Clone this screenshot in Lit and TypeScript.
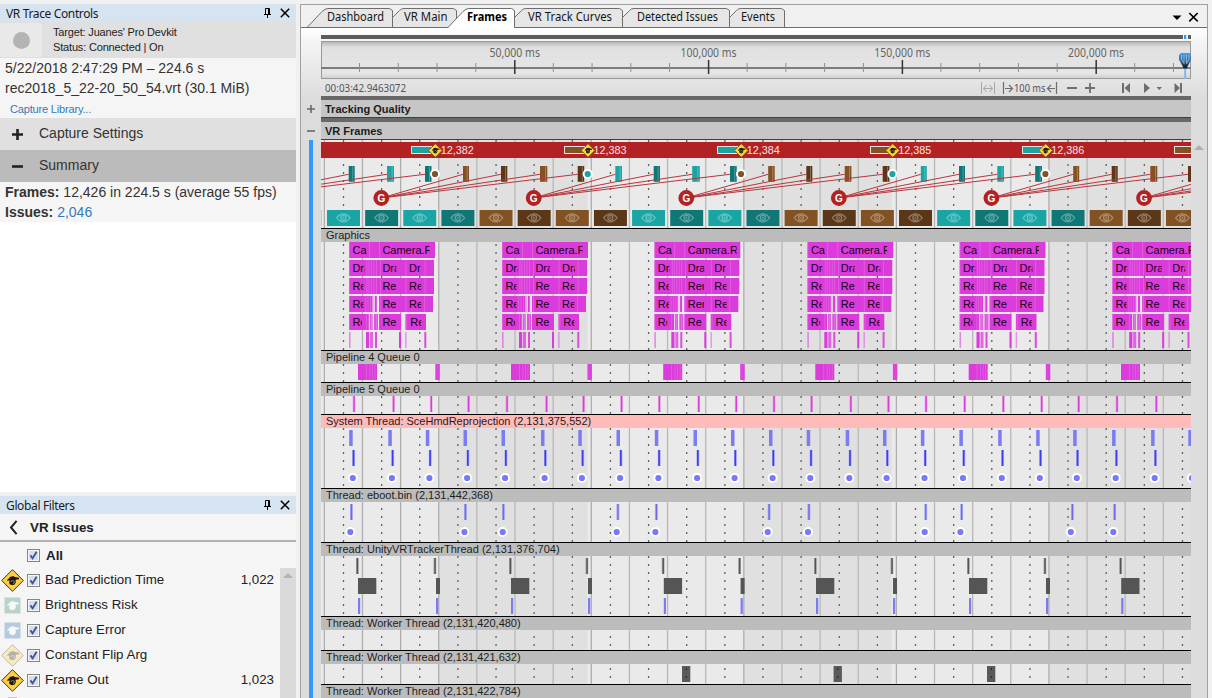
import { LitElement, html, svg, css } from "lit";
import { customElement } from "lit/decorators.js";

const X0 = 321;
const WIDTH = 870;
const STEP = 38.135;
const TEAL = "#1aa5a5";
const DTEAL = "#107777";
const BROWN = "#825223";
const DBROWN = "#5b3717";
const MAGENTA = "#db3bdb";
const CYCLE = [TEAL, DTEAL, TEAL, DTEAL, BROWN, DBROWN, BROWN, DBROWN];
const FRAME_STARTS = [435.3, 588, 741.3, 892.7, 1045.7];

const bar = (x: number, y: number, w: number, h: number, fill: string, o = 1) =>
  svg`<rect x=${x} y=${y} width=${w} height=${h} fill=${fill} fill-opacity=${o}></rect>`;

/* The bent-arrow symbol shown on every issue badge, drawn around 0,0 */
const issueGlyph = (color: string) => svg`
  <g fill=${color}>
    <path d="M-5.4 .6L-4.6-1.2L-2.6-2.2L-3.4-3.2L-1.4-3.6L.6-4.2L2.4-3.2L6.4-2.6L6.6-1L3-.6L3.4 2L2.2 4.2L-.4 5L-2.8 4L-3.4 2L-2.6 .4L-3.8 .2Z"></path>
    <path d="M-1.6 1.8A1.8 1.5 0 1 1 .4 3.3" fill="none" stroke="#fff" stroke-opacity=".5" stroke-width=".9"></path>
  </g>`;

const eye = (cx: number) => svg`
  <g transform="translate(${cx} 217.8)" fill="none" stroke="#fff" stroke-opacity=".34">
    <path d="M-6.8 0Q0-8 6.8 0Q0 8-6.8 0Z" stroke-width="1.2"></path>
    <circle r="2.5" stroke-width="1.3"></circle><circle r="1" fill="#fff" fill-opacity=".3" stroke="none"></circle>
  </g>`;

const grid = (y: number, h: number) => {
  const start = Math.floor((y - 4) / 8) * 8 + 4;
  const cols = [...Array(24).keys()];
  return svg`
    ${bar(X0, y, WIDTH, h, "#eaeaea")}
    ${bar(438.5, y, 149, h, "#e0e0e0")}${bar(743.7, y, 148, h, "#e0e0e0")}${bar(1048.7, y, 143, h, "#e0e0e0")}
    ${cols.map((k) => svg`
      ${bar(323.7 + STEP * k, y, 1.3, h, k > 2 && k % 4 !== 3 ? "#b8b8b8" : "#aeaeae")}
      <line x1=${343.5 + STEP * k} x2=${343.5 + STEP * k} y1=${start} y2=${y + h} class="dots"></line>`)}`;
};

const dot = (x: number, y: number, r: number, fill: string) => svg`
  <circle cx=${x} cy=${y} r=${r + 1.9} fill="#fff"></circle><circle cx=${x} cy=${y} r=${r} fill=${fill}></circle>`;

/* ---- VR frame overview ---- */
const MARKERS: [number, number][] = [
  [348.7, 6], [387, 7], [425, 6.5], [463, 6], [501, 6.3], [540, 7.3], [577.7, 6.5], [615.3, 6.7], [653.7, 6.3], [692.2, 7.6],
  [730, 6.7], [768.2, 6.5], [806.3, 6], [844.7, 6.7], [882.7, 6.7], [920.8, 6], [959, 6], [997.3, 6.7], [1035.2, 6.8],
  [1073.2, 6], [1111.7, 6], [1150.3, 7], [1188, 6],
];
const G_POINTS = [228.8, 381.3, 533.7, 686.3, 838.8, 991.4, 1144];

const framesLane = () => svg`
  ${bar(X0, 142, WIDTH, 16, "#b22222")}
  ${[411, 564, 717, 870, 1022, 1174].map((x, i) => svg`
    <rect x=${x + 0.5} y="146.5" width="20" height="7" fill=${i % 2 ? BROWN : TEAL} stroke="#f3e3e3"></rect>`)}
  ${FRAME_STARTS.map((x, i) => svg`
    <path transform="translate(${x} 150.5)" d="M0-6.8L6.8 0L0 6.8L-6.8 0Z" fill="#ffd23c" stroke="#6f5308" stroke-width=".8"></path>
    <g transform="translate(${x} 150.3) scale(.62)">${issueGlyph("#241c02")}</g>
    <text x=${x + 5.5} y="154" class="num" textLength="33" lengthAdjust="spacingAndGlyphs">12,38${i + 2}</text>`)}
  ${MARKERS.map(([x, w], k) => svg`
    ${bar(x, 166, w, 15.8, CYCLE[(k + 1) % 8])}${bar(x + w - 2.3, 166.5, 0.8, 15, "#fff", 0.35)}`)}
  ${G_POINTS.flatMap((g, i) => [0, 1, 2, 3].map((j) => {
    const m = MARKERS[(i - 1) * 4 + 3 + j];
    const tx = m ? m[0] : g + 81.7 + STEP * j;
    return svg`<line x1=${g} y1="198" x2=${tx} y2="174.3" stroke="#b8363c" stroke-width="1"></line>`;
  }))}
  ${G_POINTS.slice(1).map((g) => svg`<circle cx=${g} cy="198" r="7.9" fill="#b22222"></circle>
    <text x=${g} y="201.6" class="g">G</text>`)}
  ${FRAME_STARTS.map((x, i) => dot(x - 0.3, 174, 3.1, i % 2 ? TEAL : BROWN))}
  ${bar(321, 210, 1, 16, "#d6c8b6")}
  ${[...Array(23).keys()].map((k) => svg`${bar(327 + STEP * k, 210, 33, 16, CYCLE[k % 8])}${eye(343.4 + STEP * k)}`)}`;

/* ---- Graphics call stacks ---- */
const STACKS: [number, number, number][] = [[349, 47, 14], [502, 47, 14.5], [654.3, 49, 16.5], [807.3, 46.5, 14], [959.5, 46, 14], [1112.2, 48, 16]];
const seam = (xs: number[], y: number) => xs.map((x) => bar(x, y, 0.9, 16, "#fff", 0.18));
const label = (x: number, y: number, w: number, s: string) => svg`
  <svg x=${x} y=${y} width=${w} height="16" overflow="hidden"><text x="0" y="12" class="call">${s}</text></svg>`;

const stack = ([s, cam, w]: [number, number, number], i: number) => svg`
  ${bar(s, 242, 86, 16, MAGENTA)}${seam([s, s + 20, s + 30], 242)}
  ${label(s + 3.6, 242, 14.5, "Ca")}${label(s + 33.4, 242, cam, "Camera.R")}
  ${[260, 278].map((y) => svg`${bar(s, y, 85, 16, MAGENTA)}
    ${seam([s, s + 17.5, s + 19.5, s + 22, s + 24.5, s + 27, s + 31, s + 56.5, s + 75.7], y)}`)}
  ${label(s + 3.4, 260, 12.3, "Dra")}${label(s + 33.4, 260, w, "Dra")}${label(s + 60, 260, i === 1 || i > 2 ? 13 : 11.5, "Dra")}
  ${label(s + 3.4, 278, 11, "Re")}${label(s + 33.4, 278, w, i === 2 ? "Rer" : "Re")}${label(s + 60, 278, 12.3, "Re")}
  ${bar(s, 296, 23.5, 16, MAGENTA)}${bar(s + 25.8, 296, 2, 16, MAGENTA)}${bar(s + 24.2, 296, 0.8, 16, MAGENTA, 0.4)}${bar(s + 30, 296, 54, 16, MAGENTA)}
  ${seam([s, s + 16.3, s + 18.6, s + 21, s + 31, s + 56.5, s + 75], 296)}
  ${label(s + 3.4, 296, 11, "Re")}${label(s + 33.4, 296, w, i === 2 ? "Rer" : "Re")}${label(s + 60, 296, 12.3, "Re")}
  ${bar(s, 314, 19.8, 16, MAGENTA)}${bar(s + 20.7, 314, 3, 16, MAGENTA, 0.8)}${bar(s + 25, 314, 4, 16, MAGENTA, 0.85)}
  ${bar(s + 30, 314, 22, 16, MAGENTA)}${bar(s + 56.4, 314, 20.6, 16, MAGENTA)}${seam([s, s + 17, s + 22, s + 27, s + 57.3], 314)}
  ${label(s + 3.4, 314, 9.5, "Re")}${label(s + 33.4, 314, 14, "Re")}${label(s + 61.3, 314, 11, "Re")}
  ${bar(s, 332, 1.6, 16, MAGENTA, 0.55)}${bar(s + 17, 332, 3.2, 16, MAGENTA)}${bar(s + 21, 332, 3, 16, MAGENTA, 0.75)}${bar(s + 26, 332, 2, 16, MAGENTA, 0.9)}
  ${bar(s + 50, 332, 2, 16, MAGENTA)}${bar(s + 56.2, 332, 1.4, 16, MAGENTA, 0.5)}${bar(s + 75.3, 332, 2, 16, MAGENTA, 0.9)}`;

const graphicsLane = () => svg`${STACKS.map(stack)}`;

const pipe4Lane = () => svg`
  ${[358, 511, 663.2, 815.3, 968.7, 1121].map((x) => svg`${bar(x, 364, 19, 16, MAGENTA)}${seam([x + 8, x + 11.4, x + 14, x + 16.5], 364)}`)}
  ${[435.3, 587.4, 740.2, 892.8, 1045.8].map((x) => bar(x, 364, 4.5, 16, MAGENTA, 0.95))}`;

const TICKS5 = [353, 392.5, 430.2, 467.5, 506, 545.5, 582.5, 620.5, 658.3, 697.7, 735.2, 773, 810.5, 849.8, 887.4, 925, 963.6, 1002.3, 1040.6, 1077.6, 1116, 1155.3];
const pipe5Lane = () => svg`${TICKS5.map((x) => svg`${bar(x - 0.3, 396, 2.6, 16, MAGENTA, 0.4)}${bar(x + 0.4, 396, 1.4, 16, MAGENTA)}`)}`;

const SYS = [349.2, 388.3, 425.8, 463.5, 501.5, 541, 578.3, 616.5, 654.8, 693.5, 731, 769, 806.7, 845.7, 883, 920.9, 959.4, 998.2, 1036.2, 1073.2, 1112.1, 1151.1, 1188.3];
const systemLane = () => svg`${SYS.map((x) => svg`
  ${bar(x, 430, 3.5, 16, "#7b7bf5")}${bar(x + 3, 450, 2.8, 16, "#9999f5", 0.8)}${bar(x + 3.5, 450, 1.6, 16, "#3c3cf8")}${dot(x + 3.6, 478, 3.1, "#7878fc")}`)}`;

const EBOOT: [number, number][] = [[350, 350.3], [464, 464.4], [502, 502.7], [616.5, 616.7], [655, 655.4], [767.7, 767.7], [807.5, 808], [924.3, 924.7], [960.2, 960.4], [1071, 1070.8], [1113.2, 1113.3]];
const ebootLane = () => svg`${EBOOT.map(([a, b]) => svg`
  ${bar(a, 504, 2.8, 16, "#9292f3", 0.75)}${bar(a + 0.8, 504, 1.3, 16, "#6c6cec")}${dot(b, 532, 3.1, "#7878fc")}`)}`;

const UNITY = [358, 436, 511, 588, 663.8, 740.6, 816, 893, 969, 1046, 1121.2];
const unityLane = () => svg`${UNITY.map((x, i) => svg`
  ${bar(x - 2 - (i % 2 ? 0.4 : 0), 558, 2.6, 16, "#999")}${bar(x - 1.2 - (i % 2 ? 0.4 : 0), 558, 1.3, 16, "#555")}
  ${bar(x, 578, i % 2 ? 4 : 18.3, 16, "#555")}${bar(x, 598, 2.2, 16, "#7b7bf3")}`)}`;

const emptyLane = () => svg``;
const worker2Lane = () => svg`${[682, 833.6, 987].map((x) => svg`${bar(x, 666, 8.3, 16, "#5a5a5a")}
  <path d="M${x + 4.3} 668v2M${x + 4.3} 676v2" stroke="#222"></path>`)}`;

const LANES = [
  { title: "Graphics", y: 242, h: 108, draw: graphicsLane },
  { title: "Pipeline 4 Queue 0", y: 364, h: 18, draw: pipe4Lane },
  { title: "Pipeline 5 Queue 0", y: 396, h: 18, draw: pipe5Lane },
  { title: "System Thread: SceHmdReprojection (2,131,375,552)", y: 428, h: 60, draw: systemLane, hot: true },
  { title: "Thread: eboot.bin (2,131,442,368)", y: 502, h: 40, draw: ebootLane },
  { title: "Thread: UnityVRTrackerThread (2,131,376,704)", y: 556, h: 60, draw: unityLane },
  { title: "Thread: Worker Thread (2,131,420,480)", y: 630, h: 20, draw: emptyLane },
  { title: "Thread: Worker Thread (2,131,421,632)", y: 664, h: 20, draw: worker2Lane },
];

@customElement("trace-tracks")
class TraceTracks extends LitElement {
  static styles = css`
    :host { display: block; width: 870px; font: 11px "Liberation Sans", Arial, sans-serif; }
    svg { display: block; }
    .dots { stroke: #606060; stroke-width: 1.3; stroke-dasharray: 2 6; }
    .head { box-sizing: border-box; height: 14px; line-height: 13px; border-top: 1px solid #000; background: #bcbcbc; color: #1c1c1c; padding-left: 5px; white-space: nowrap; }
    .hot { background: #ffbaba; }
    .num { font-size: 11px; fill: #fbe4e4; }
    .g { font-size: 10px; font-weight: bold; fill: #fff; text-anchor: middle; }
    .call { font-size: 11px; fill: #180018; }
  `;
  render() {
    return html`
      <svg width="870" height="88" viewBox="321 140 870 88">${grid(140, 88)}${framesLane()}</svg>
      ${LANES.map((l) => html`
        <div class="head ${l.hot ? "hot" : ""}">${l.title}</div>
        <svg width="870" height=${l.h} viewBox="321 ${l.y} 870 ${l.h}">${grid(l.y, l.h)}${l.draw()}</svg>`)}
      <div class="head">Thread: Worker Thread (2,131,422,784)</div>`;
  }
}

const pinIcon = html`<svg width="9" height="12" viewBox="0 0 9 12" fill="none" stroke="#000"><path d="M2.5 7V1.5h4V7M5.5 1.5V7M1 7.5h7M4.5 8v3"></path></svg>`;
const closeIcon = html`<svg width="10" height="10" viewBox="0 0 10 10" stroke="#000" stroke-width="1.5"><path d="M.8.8l8.4 8.4M9.2.8L.8 9.2"></path></svg>`;

@customElement("side-panels")
class SidePanels extends LitElement {
  static styles = css`
    :host { display: flex; flex-direction: column; width: 296px; height: 698px; overflow: hidden; box-sizing: border-box; padding-top: 4px; font: 14px/20px "Liberation Sans", Arial, sans-serif; color: #333; }
    svg { display: block; flex: none; }
    .title { height: 18px; flex: none; display: flex; align-items: center; background: #d6e4f2; padding: 0 6px; color: #1b1b1b; font: 12px/18px "Noto Sans", sans-serif; letter-spacing: -.36px; }
    .title span { flex: 1; padding-top: 1px; }
    .title svg + svg { margin-left: 8px; }
    .target { height: 36px; flex: none; display: flex; align-items: center; gap: 11px; background: #e0e0e0; font-size: 11px; line-height: 15px; color: #222; letter-spacing: -.17px; }
    .rec { width: 42px; height: 34px; border-radius: 3px; background: #e9e9e9; display: grid; place-items: center; }
    .rec i { width: 17px; height: 17px; border-radius: 50%; background: #b4b4b4; }
    .body { background: #f5f5f5; padding: 0 5px; white-space: nowrap; flex: none; }
    .info { height: 60px; }
    .link { color: #337ab7; }
    .lib { font-size: 11px; padding-left: 5px; line-height: 22px; letter-spacing: -.17px; }
    .acc { height: 32px; flex: none; display: flex; align-items: center; gap: 16px; padding-left: 12px; background: #e0e0e0; }
    .acc.open { background: #bbb; }
    .acc span { margin-top: -2px; }
    .blank { background: #fff; height: 270px; flex: none; margin-bottom: 4px; }
    .back { height: 25px; flex: none; display: flex; align-items: center; gap: 12px; padding: 1px 0 0 9px; background: #f5f5f5; border-bottom: 2px solid #b3b3b3; font-weight: bold; }
    .all, .row { display: flex; align-items: center; height: 25px; }
    .filters { flex: 1; background: #f5f5f5; display: flex; flex-direction: column; min-height: 0; color: #222; font-size: 13.33px; }
    .all { padding: 1px 0 0 27px; font-weight: bold; gap: 6px; flex: none; }
    .split { display: flex; flex: 1; min-height: 0; }
    .list { flex: 1; overflow: hidden; }
    .row { padding-right: 6px; }
    .row svg + svg { margin: 0 5px 0 2px; }
    .row span { flex: 1; white-space: nowrap; }
    .row span, .row em { margin-top: -1px; font-style: normal; }
    .bar { width: 16px; background: #dadada; display: flex; justify-content: center; padding-top: 5px; }
  `;
  check() {
    return html`<svg width="13" height="13" viewBox="0 0 13 13"><rect x=".5" y=".5" width="12" height="12" fill="#f7f7f7" stroke="#858585"></rect><rect x="2" y="2" width="9" height="9" fill="#d9dee6"></rect><path d="M3.4 6.4L5.6 9.4L9.6 2.8" fill="none" stroke="#3c57a0" stroke-width="1.9"></path></svg>`;
  }
  badge(kind: string) {
    const body = kind === "warn" || kind === "dim"
      ? svg`<path d="M12.5 1.7L23.3 12.5L12.5 23.3L1.7 12.5Z" fill="#ffce42" stroke="#3c3418" stroke-width="1"></path>`
      : svg`<rect x="4.5" y="4.5" width="16" height="16" fill=${kind}></rect>`;
    const color = kind === "warn" || kind === "dim" ? "#1c1602" : "#f3f8f8";
    return html`<svg width="25" height="25" viewBox="0 0 25 25" opacity=${kind === "dim" ? 0.3 : 1}>${body}<g transform="translate(12.5 12.3)">${issueGlyph(color)}</g></svg>`;
  }
  render() {
    const rows = [
      ["Bad Prediction Time", "1,022", "warn"], ["Brightness Risk", "", "#b9d3cb"], ["Capture Error", "", "#b5cade"],
      ["Constant Flip Arg", "", "dim"], ["Frame Out", "1,023", "warn"],
    ];
    return html`
      <div class="title"><span>VR Trace Controls</span>${pinIcon}${closeIcon}</div>
      <div class="target"><div class="rec"><i></i></div><div>Target: Juanes' Pro Devkit<br>Status: Connected | On</div></div>
      <div class="body info"><div>5/22/2018 2:47:29 PM – 224.6 s</div><div>rec2018_5_22-20_50_54.vrt (30.1 MiB)</div><div class="link lib">Capture Library...</div></div>
      <div class="acc"><svg width="11" height="11"><path d="M0 5.5h11M5.5 0v11" stroke="#222" stroke-width="2.6"></path></svg><span>Capture Settings</span></div>
      <div class="acc open"><svg width="11" height="11"><path d="M0 5.5h11" stroke="#222" stroke-width="2.6"></path></svg><span>Summary</span></div>
      <div class="body"><div><b>Frames:</b> 12,426 in 224.5 s (average 55 fps)</div><div><b>Issues:</b> <span class="link">2,046</span></div></div>
      <div class="blank"></div>
      <div class="title"><span>Global Filters</span>${pinIcon}${closeIcon}</div>
      <div class="filters">
        <div class="back"><svg width="9" height="15" viewBox="0 0 9 15"><path d="M7.6.8L2 7.5L7.6 14.2" fill="none" stroke="#222" stroke-width="2"></path></svg>VR Issues</div>
        <div class="all">${this.check()}All</div>
        <div class="split">
          <div class="list">
            ${rows.map((r) => html`<div class="row">${this.badge(r[2])}${this.check()}<span>${r[0]}</span><em>${r[1]}</em></div>`)}
            <svg width="25" height="6"><rect x="8" y="4" width="9" height="2" fill="#e8bdb8"></rect></svg>
          </div>
          <div class="bar"><svg width="10" height="5"><path d="M0 5L5 0L10 5Z" fill="#b3b3b3"></path></svg></div>
        </div>
      </div>`;
  }
}

interface Tab { text: string; x: number; end: number; tx: number; len: number; active?: boolean; long?: boolean }
const TABS: Tab[] = [
  { text: "Dashboard", x: 307, end: 393, tx: 327, len: 57, long: true },
  { text: "VR Main", x: 393, end: 457, tx: 404, len: 43.5 },
  { text: "VR Track Curves", x: 515, end: 623, tx: 528, len: 84 },
  { text: "Detected Issues", x: 623, end: 730, tx: 637, len: 81 },
  { text: "Events", x: 730, end: 785, tx: 741, len: 34 },
  { text: "Frames", x: 448, end: 515, tx: 467, len: 40, long: true, active: true },
];

@customElement("app-root")
class AppRoot extends LitElement {
  static styles = css`
    :host { display: flex; width: 1212px; height: 698px; overflow: hidden; background: #f0f0f0; font-family: "Noto Sans", sans-serif; }
    svg { display: block; }
    .doc { margin: 4px 0 0 4px; width: 908px; box-sizing: border-box; height: 694px; border: 1px solid #a0a0a0; border-bottom: 0; display: flex; flex-direction: column; background: #f0f0f0; }
    .tab { font-size: 12px; fill: #161616; }
    .sel { font-weight: bold; fill: #000; }
    .view { flex: 1; min-height: 0; padding: 7px 0 0; background: linear-gradient(#fff, #f4f4f4 14px, #dcdcdc 72px); }
    .time { margin-left: 20px; }
    .rul { font-size: 12px; fill: #666; text-anchor: middle; }
    .stamp { font-size: 11px; fill: #555; }
    .group { display: flex; align-items: stretch; height: 22px; }
    .sign { width: 20px; display: grid; place-items: center; padding-top: 4px; box-sizing: border-box; }
    .name { width: 870px; box-sizing: border-box; border-top: 4px solid #686868; border-bottom: 1px solid #404040; background: #c6c6c6; font: bold 11px/18px "Liberation Sans", Arial, sans-serif; color: #1c1c1c; padding-left: 4px; }
    .tracks { display: flex; }
    .rail { width: 4px; margin: 0 8px; background: #3399ff; height: 558px; }
    .scroll { flex: 1; padding: 5px 0 0 3px; }
  `;
  tabShape(t: Tab) {
    const d = t.long
      ? `M${t.x} 27.5L${t.x + 15} 11.5Q${t.x + 18} 8.5 ${t.x + 21} 8.5H${t.end - 3.5}L${t.end - 0.5} 10.5V27.5`
      : `M${t.x - 0.5} 27.5V17.5L${t.x + 6.5} 10.5Q${t.x + 8} 8.5 ${t.x + 11} 8.5H${t.end - 3.5}L${t.end - 0.5} 10.5V27.5`;
    return svg`<path d=${d} fill=${t.active ? "#fff" : "#e6e6e6"} stroke="#6e6e6e"></path>
      ${t.active ? svg`<path d="M${t.x + 0.8} 27.5H${t.end - 1}" stroke="#fff"></path>` : svg`<path d="M${t.x} 27.5H${t.end}" stroke="#6e6e6e"></path>`}
      <text class="tab ${t.active ? "sel" : ""}" x=${t.tx} y="21" textLength=${t.len} lengthAdjust="spacingAndGlyphs">${t.text}</text>`;
  }
  render() {
    return html`
      <side-panels></side-panels>
      <div class="doc">
        <svg width="906" height="23" viewBox="301 5 906 23">
          <path d="M301 27.5H1207" stroke="#6e6e6e"></path>
          ${TABS.map((t) => this.tabShape(t))}
          <path d="M1172.5 15.5h9l-4.5 4.5z"></path>
          <path d="M1189.3 13l8.4 8.4M1197.7 13l-8.4 8.4" stroke="#000" stroke-width="1.6"></path>
        </svg>
        <div class="view">
          <svg class="time" width="882" height="61" viewBox="321 35 882 61">
            <defs><linearGradient id="r" x2="0" y2="1"><stop offset="0" stop-color="#b4b4b4"></stop><stop offset=".16" stop-color="#e0e0e0"></stop><stop offset=".85" stop-color="#e6e6e6"></stop><stop offset="1" stop-color="#cfcfcf"></stop></linearGradient>
              <linearGradient id="p" x2="0" y2="1"><stop offset="0" stop-color="#3f9cf0"></stop><stop offset=".45" stop-color="#3a6d9c"></stop><stop offset="1" stop-color="#101418"></stop></linearGradient></defs>
            ${bar(321, 35, 870, 4, "#5c5c5c")}${bar(1183, 35, 5, 4, "#f8f8f8")}${bar(1184, 35, 2.3, 4, "#3399ff")}
            <rect x="321.5" y="41.5" width="869" height="37" fill="url(#r)" stroke="#999"></rect>
            ${bar(321, 67, 870, 2, "#7c7c7c")}
            ${[...Array(22).keys()].map((i) => (i + 1) % 5 ? bar(359 + 38.76 * i, 63, 1, 9, "#8f8f8f") : bar(359 + 38.76 * i, 60, 1.5, 14, "#333"))}
            ${["50,000 ms", "100,000 ms", "150,000 ms", "200,000 ms"].map((s, i) => svg`<text class="rul" x=${514.7 + 193.8 * i} y="57.3" textLength=${i ? 56 : 50.5} lengthAdjust="spacingAndGlyphs">${s}</text>`)}
            ${bar(1184.2, 68, 2, 11, "#7cb9f2")}
            <path d="M1179 55L1181 53H1189.5L1191 55V59.5L1186.7 68.5H1183.8L1179 59.5Z" fill="url(#p)"></path>
            <path d="M1181.5 55v4l1.8 4M1184 54.5V64M1186.5 54.5V64M1189 55v4l-1.8 4" fill="none" stroke="#b8dcf8" stroke-opacity=".8" stroke-width=".8"></path>
            <text class="stamp" x="325" y="92" textLength="81" lengthAdjust="spacingAndGlyphs">00:03:42.9463072</text>
            <g fill="none" stroke="#a8a8a8"><path d="M981.5 82v12M994.5 82v12M983.5 88.5h9M986.5 85l-3 3.5l3 3.5M989.5 85l3 3.5l-3 3.5"></path></g>
            <g fill="none" stroke="#6e6e6e" stroke-width="1.2"><path d="M1003.5 82v12M1005 88.5h7M1009 85l3.5 3.5L1009 92M1056.5 82v12M1048 88.5h7M1051 85l-3.5 3.5L1051 92"></path></g>
            <text class="stamp" x="1014" y="92" textLength="31.5" lengthAdjust="spacingAndGlyphs">100 ms</text>
            <path d="M1067 88h10M1085 88h10M1090 83v10" stroke="#6e6e6e" stroke-width="1.8"></path>
            <g fill="#6e6e6e"><path d="M1122 83h2v10h-2zM1130 83v10l-5.5-5zM1144 83l6 5l-6 5zM1156.5 87h5.5l-2.7 3zM1174.5 83l5.5 5l-5.5 5zM1180 83h2v10h-2z"></path></g>
          </svg>
          <div class="group"><div class="sign"><svg width="8" height="8"><path d="M0 4h8M4 0v8" stroke="#6a6a6a" stroke-width="1.6"></path></svg></div><div class="name">Tracking Quality</div></div>
          <div class="group"><div class="sign"><svg width="8" height="8"><path d="M0 4h8" stroke="#6a6a6a" stroke-width="1.6"></path></svg></div><div class="name">VR Frames</div></div>
          <div class="tracks"><div class="rail"></div><trace-tracks></trace-tracks>
            <div class="scroll"><svg width="10" height="5"><path d="M0 5L5 0L10 5Z" fill="#b0b0b0"></path></svg></div></div>
        </div>
      </div>`;
  }
}
